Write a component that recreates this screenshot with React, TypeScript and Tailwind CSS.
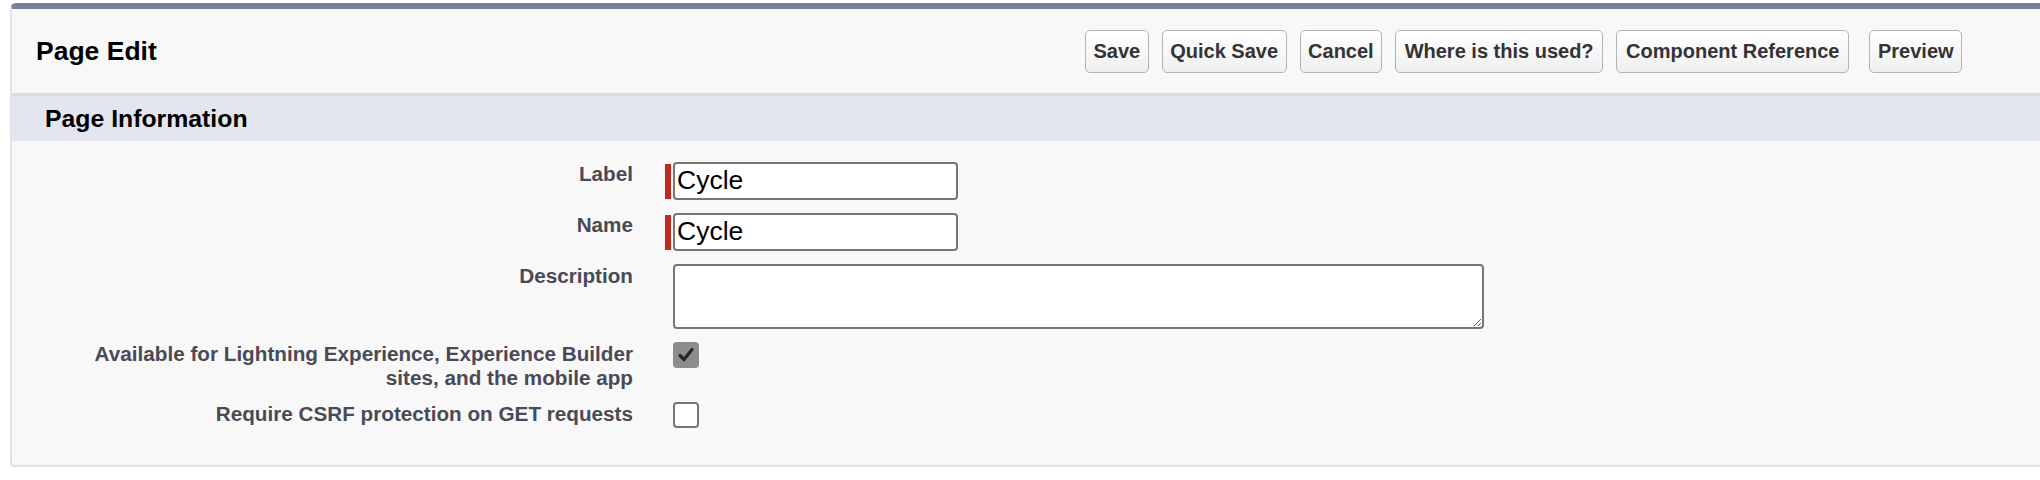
import React from "react";

function Btn({ children, extra = "" }: { children: React.ReactNode; extra?: string }) {
  return (
    <button
      type="button"
      className={
        "h-[43px] px-[7.5px] rounded-[5px] border border-[#b3b3b3] bg-linear-to-b from-[#ffffff] to-[#efefef] text-[20px] font-bold text-[#333333] leading-none whitespace-nowrap " +
        extra
      }
    >
      {children}
    </button>
  );
}

function FieldLabel({ children }: { children: React.ReactNode }) {
  return (
    <div className="text-right text-[20.7px] font-bold text-[#4a4a56] leading-[23.5px]">
      {children}
    </div>
  );
}

function Required({ value }: { value: string }) {
  return (
    <div className="flex items-center gap-[2px]">
      <div className="w-[6px] h-[35px] bg-[#c0291f]" />
      <input
        readOnly
        value={value}
        className="w-[285px] h-[38px] border-2 border-[#767676] rounded-[4px] bg-white pl-[2px] text-[26.5px] text-black outline-none"
      />
    </div>
  );
}

export default function App() {
  return (
    <div className="w-full h-[480px] bg-white font-['Liberation_Sans',Arial,sans-serif] pt-[3px] overflow-hidden">
      <div className="ml-[10px] bg-[#f8f8f8] border-t-[6px] border-t-[#77829a] border-l-2 border-l-[#e2e2e2] border-b-2 border-b-[#e2e2e2] rounded-tl-[6px] rounded-bl-[4px]">
        {/* header */}
        <div className="flex items-center h-[87px] border-b-[3px] border-b-[#dcdcdf]">
          <div className="w-[1073px] pl-[24px] text-[26.5px] font-bold text-black leading-none">
            Page Edit
          </div>
          <div className="flex items-center gap-[13px]">
            <Btn>Save</Btn>
            <Btn>Quick Save</Btn>
            <Btn>Cancel</Btn>
            <Btn extra="px-[8.5px]">Where is this used?</Btn>
            <Btn extra="px-[9px]">Component Reference</Btn>
            <Btn extra="ml-[7px]">Preview</Btn>
          </div>
        </div>

        {/* section header */}
        <div className="flex items-center h-[45px] bg-[#e3e6ef] pl-[33px] text-[24.8px] font-bold text-black">
          Page Information
        </div>

        {/* form */}
        <div className="grid grid-cols-[621px_1fr] gap-x-[32px] gap-y-[13px] pt-[21px] pb-[37px]">
          <FieldLabel>Label</FieldLabel>
          <Required value="Cycle" />

          <FieldLabel>Name</FieldLabel>
          <Required value="Cycle" />

          <FieldLabel>Description</FieldLabel>
          <div className="pl-[8px] flex">
            <textarea
              readOnly
              className="w-[811px] h-[65px] border-2 border-[#767676] rounded-[4px] bg-white outline-none block"
            />
          </div>

          <FieldLabel>
            Available for Lightning Experience, Experience Builder
            <br />
            sites, and the mobile app
          </FieldLabel>
          <div className="pl-[8px]">
            <div className="w-[26px] h-[26px] rounded-[4px] bg-[#8d8d8d] flex items-center justify-center">
              <svg width="20" height="20" viewBox="0 0 20 20">
                <path d="M4 10.5 L8 14.5 L16 4.5" fill="none" stroke="#262626" strokeWidth="3.2" strokeLinecap="round" strokeLinejoin="round" />
              </svg>
            </div>
          </div>

          <FieldLabel>Require CSRF protection on GET requests</FieldLabel>
          <div className="pl-[8px]">
            <div className="w-[26px] h-[26px] rounded-[4px] bg-white border-2 border-[#767676]" />
          </div>
        </div>
      </div>
    </div>
  );
}
